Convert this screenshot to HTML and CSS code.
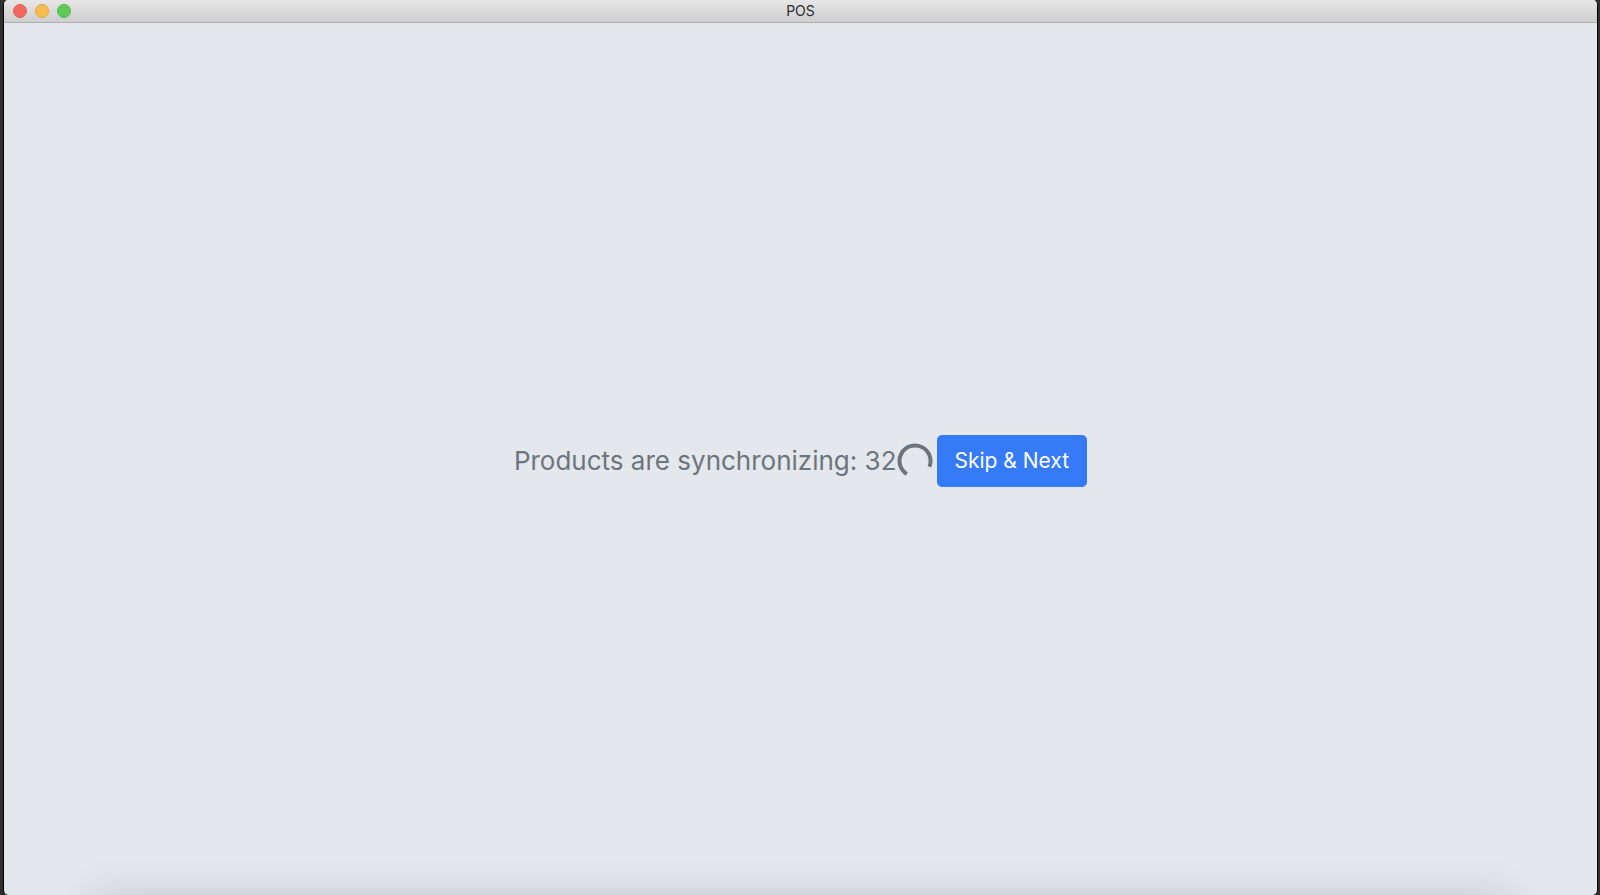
FILE: index.html
```html
<!DOCTYPE html>
<html lang="en">
<head>
<meta charset="utf-8">
<title>POS</title>
<link rel="stylesheet" href="styles.css">
</head>
<body>
<div class="window">
  <header class="titlebar">
    <div class="controls">
      <button class="control close" aria-label="Close"></button>
      <button class="control minimize" aria-label="Minimize"></button>
      <button class="control maximize" aria-label="Maximize"></button>
    </div>
    <h1 class="title">POS</h1>
  </header>
  <main class="content">
    <div class="sync">
      <span class="status" role="status">Products are synchronizing: 32</span>
      <svg class="spinner" viewBox="0 0 36 36" aria-hidden="true">
        <path d="M9.8 31.1A15.5 15.5 0 1 1 32.4 23.8" fill="none" stroke="currentColor" stroke-width="4"/>
      </svg>
      <button class="skip">Skip &amp; Next</button>
    </div>
  </main>
</div>
</body>
</html>
```
FILE: styles.css
```css
* {
  box-sizing: border-box;
}

body {
  margin: 0;
  background: #302f2d;
  font-family: Inter, "Liberation Sans", sans-serif;
}

.window {
  display: flex;
  flex-direction: column;
  height: 100vh;
  margin: 0 2px 0 3px;
  border: solid #000;
  border-width: 0 1px;
  border-radius: 5px;
  overflow: hidden;
  background: #e4e8ed;
}

.titlebar {
  display: grid;
  grid-template-columns: 1fr auto 1fr;
  align-items: center;
  height: 23px;
  padding: 0 9px;
  border-bottom: 1px solid #adadad;
  background: linear-gradient(#e6e6e6, #cecece);
}

.controls {
  display: flex;
  gap: 8px;
}

.control {
  width: 14px;
  height: 14px;
  padding: 0;
  border: 1px solid;
  border-radius: 50%;
}

.close {
  border-color: #df6057;
  background: #f0685f;
}

.minimize {
  border-color: #dfa544;
  background: #f6be4f;
}

.maximize {
  border-color: #55b548;
  background: #61c955;
}

.title {
  margin: 0;
  color: #2d2d2d;
  font-size: 14px;
  font-weight: 400;
  line-height: 22px;
}

.content {
  position: relative;
  display: flex;
  flex: 1;
  align-items: center;
  justify-content: center;
  padding-top: 3px;
  overflow: hidden;
}

/* Soft shadow rising from the bottom edge of the window */
.content::after {
  content: "";
  position: absolute;
  right: 88px;
  bottom: -40px;
  left: 88px;
  height: 40px;
  box-shadow: 0 0 40px rgba(0, 0, 0, 0.14);
}

.sync {
  display: flex;
  align-items: center;
  color: #6c757d;
}

.status {
  font-size: 26px;
  line-height: 34px;
  white-space: nowrap;
}

.spinner {
  width: 36px;
  height: 36px;
  margin-right: 4px;
}

.skip {
  height: 52px;
  padding: 0 18px;
  border: 0;
  border-radius: 5px;
  background: #357af6;
  color: #fff;
  font-family: inherit;
  font-size: 21px;
  line-height: 28px;
  white-space: nowrap;
}
```
